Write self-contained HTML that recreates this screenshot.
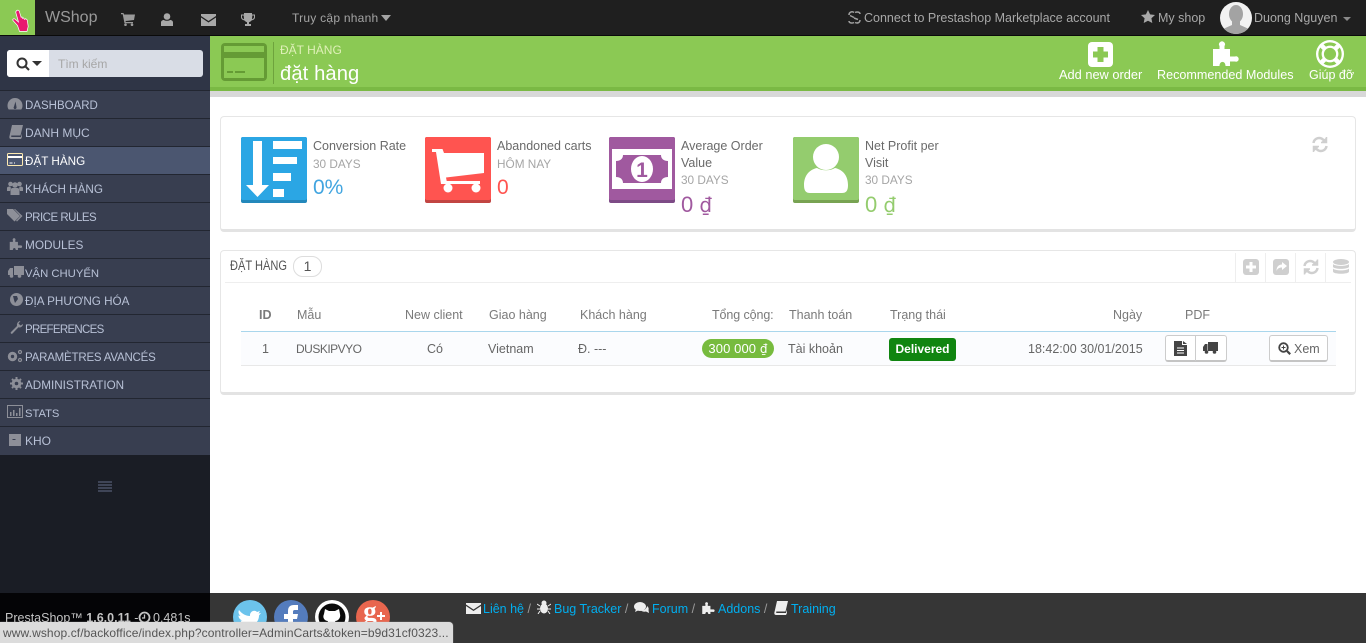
<!DOCTYPE html>
<html lang="vi"><head><meta charset="utf-8"><title>Đặt hàng</title>
<style>
html,body{margin:0;padding:0;width:1366px;height:643px;overflow:hidden;background:#fff;font-family:"Liberation Sans",sans-serif;font-size:13px;color:#666}
.a,.t,svg{position:absolute}
.t{white-space:nowrap;line-height:16px}
.m{position:absolute;left:0;width:210px;height:27px;background:#383e50;border-top:1px solid #222631}
.m span{position:absolute;left:25px;top:7px;font-size:11.700px;line-height:16px;color:#b8c1d6;white-space:nowrap}
.m svg{left:7px;top:6px}
.m.on{background:#4b5670}.m.on span{color:#fff}
.h{color:#7a7a7a;font-size:12.500px}
.k{color:#6a6a6a;font-size:12.500px}
.r{font-size:12.500px}
.s{color:#a5a5a5;font-size:11.800px}
.d{font-family:"DejaVu Sans",sans-serif}
a{color:#00aff0;text-decoration:none}
</style></head><body>

<!-- top bar -->
<div class="a" style="left:0;top:0;width:1366px;height:35px;background:#1f1f1f;border-bottom:1px solid #0a0a0a"></div>
<div class="a" style="left:0;top:0;width:35px;height:35px;background:#8bc954"></div>
<svg style="left:11px;top:9px" width="22" height="25" viewBox="0 0 22 25"><path d="M6 1.500c1-.8 2 0 2.300.8l1.800 6 .8-.4.6 1.500 1-.6 1 1.600 1.200-.7 1.500 1.200 1 6.500-1.200 5H8.500L6.500 16.500 2 11.500c-.8-1.200.8-2.300 1.800-1.500L7.500 13 4.800 3.500C4.700 2.700 5.300 1.800 6 1.500z" fill="#e8186f" stroke="#fff" stroke-width=".7"/></svg>
<div class="t" style="left:45px;top:8px;font-size:16px;line-height:20px;color:#999">WShop</div>

<svg style="left:121px;top:13px" width="14" height="13" viewBox="0 0 14 13" fill="#9a9a9a"><path d="M0 0h2.500l.5 1.500h11l-1 5.500-8.500 1 .3 1H12v1.200H3.500L1.700 1.200H0z"/><circle cx="4.500" cy="11.700" r="1.300"/><circle cx="11" cy="11.700" r="1.300"/></svg>
<svg style="left:161px;top:13px" width="12" height="13" viewBox="0 0 12 13" fill="#a8a8a8"><circle cx="6" cy="3.500" r="3.300"/><path d="M0 13V9.500C0 7.800 1.500 7 3 7c1 1 5 1 6 0 1.500 0 3 .8 3 2.500V13z"/></svg>
<svg style="left:201px;top:14px" width="15" height="12" viewBox="0 0 15 12" fill="#a8a8a8"><path d="M0 0h15v2L7.500 7 0 2z"/><path d="M0 3.500 7.500 8.500 15 3.500V12H0z"/></svg>
<svg style="left:241px;top:13px" width="14" height="13" viewBox="0 0 14 13" fill="#a8a8a8"><path d="M3 0h8v1.500h3V4c0 2-1.500 3-3.500 3.500C10 8.500 8.500 9 8 9.200V11h2v2H4v-2h2V9.200C5.500 9 4 8.500 3.500 7.500 1.500 7 0 6 0 4V1.500h3zM1 2.500V4c0 1 .8 1.800 2 2.200L2.700 2.500zM13 2.500h-1.700L11 6.200C12.200 5.800 13 5 13 4z"/></svg>
<div class="t" style="left:292px;top:10px;font-size:12px;letter-spacing:.25px;color:#a4a4a4">Truy cập nhanh</div>
<div class="a" style="left:381px;top:15px;border:5px solid transparent;border-top:6px solid #a4a4a4"></div>

<svg style="left:847px;top:10px" width="15" height="15" viewBox="0 0 15 15" fill="none" stroke="#a0a0a0" stroke-width="1.500"><path d="M2 5c0-3 3-4 5-2.500M8 2.500C10 1.500 13 2 13 4M3 5.500l4 2M7 8l4 1.500M13 10c0 3-3 3.500-5 2.500M7 12.500c-2 1-5 .5-5-1.500"/></svg>
<div class="t" style="left:864px;top:10px;font-size:12.500px;color:#a8a8a8">Connect to Prestashop Marketplace account</div>
<svg style="left:1141px;top:10px" width="14" height="13" viewBox="0 0 14 13"><path d="M7 0l2.100 4.400 4.900.6-3.600 3.300.9 4.700L7 10.700 2.700 13l.9-4.700L0 5l4.900-.6z" fill="#a8a8a8"/></svg>
<div class="t" style="left:1158px;top:10px;font-size:12.500px;color:#a8a8a8">My shop</div>
<svg style="left:1220px;top:2px" width="32" height="32" viewBox="0 0 32 32"><circle cx="16" cy="16" r="16" fill="#f2f2f2"/><clipPath id="av"><circle cx="16" cy="16" r="16"/></clipPath><g clip-path="url(#av)" fill="#a3a3a3"><ellipse cx="16" cy="12" rx="7" ry="9"/><path d="M12 19h8v4l9 4v6H3v-6l9-4z"/></g></svg>
<div class="t" style="left:1254px;top:10px;font-size:12.500px;color:#a8a8a8">Duong Nguyen</div>
<div class="a" style="left:1343px;top:17px;border:4px solid transparent;border-top:4px solid #8a8a8a"></div>

<!-- sidebar -->
<div class="a" style="left:0;top:36px;width:210px;height:54px;background:#2f3546"></div>
<div class="a" style="left:0;top:455px;width:210px;height:138px;background:#1a1d25"></div>
<div class="a" style="left:0;top:593px;width:210px;height:50px;background:#040406"></div>
<div class="a" style="left:7px;top:50px;width:196px;height:27px;background:#d9dde6;border-radius:3px"></div>
<div class="a" style="left:7px;top:50px;width:42px;height:27px;background:#fff;border-radius:3px 0 0 3px"></div>
<svg style="left:16px;top:57px" width="14" height="14" viewBox="0 0 14 14" fill="none" stroke="#333" stroke-width="2"><circle cx="6" cy="6" r="4.500"/><path d="M9.500 9.500 13 13"/></svg>
<div class="a" style="left:32px;top:61px;border:5px solid transparent;border-top:5px solid #333"></div>
<div class="t" style="left:58px;top:56px;font-size:12px;color:#a6a6a6">Tìm kiếm</div>

<div class="m" style="top:90px"><svg width="16" height="14" viewBox="0 0 16 14" fill="#8d8f98"><path d="M8 1a7.500 7.500 0 0 0-7.500 7.500c0 1.500.4 3 1.200 4h12.600c.8-1 1.200-2.500 1.200-4A7.500 7.500 0 0 0 8 1zM7 9.500l1.500-5 1 5.500a1.500 1.500 0 1 1-2.500-.5z"/></svg><span style="font-size:11.500px">DASHBOARD</span></div>
<div class="m" style="top:118px"><svg width="14" height="14" viewBox="0 0 14 14" fill="#8d8f98" style="left:9px"><path d="M3 0h11l-2.500 10.500H2.500C2 10.500 2 12 2.700 12H12l1-3.500V12l-1 2H2C.5 14 0 12.500.5 11z"/></svg><span style="font-size:12px;top:6px">DANH MỤC</span></div>
<div class="m on" style="top:146px"><svg width="16" height="13" viewBox="0 0 16 13" fill="none" stroke="#fff" style="left:7px"><rect x=".5" y=".5" width="15" height="12" rx="1" stroke="#fde9b0"/><path d="M1 4h14" stroke-width="2"/><path d="M2.500 10h3M7 10h1"/></svg><span>ĐẶT HÀNG</span></div>
<div class="m" style="top:174px"><svg width="16" height="14" viewBox="0 0 16 14" fill="#8d8f98"><circle cx="3.500" cy="3" r="2.300"/><circle cx="12.500" cy="3" r="2.300"/><circle cx="8" cy="4" r="2.800"/><path d="M0 10V7c0-1 1-1.500 3-1.500L4 7l-1 3zM16 10V7c0-1-1-1.500-3-1.500L12 7l1 3zM3.500 14V9.500c0-1.500 1-2.500 2-2.500h5c1 0 2 1 2 2.500V14z"/></svg><span>KHÁCH HÀNG</span></div>
<div class="m" style="top:202px"><svg width="16" height="13" viewBox="0 0 16 13" fill="#8d8f98"><path d="M0 0h6l7 7-5.500 5.500L0 5z"/><path d="M8 0l7.500 7-5.500 5.500-1-.8 4.500-4.700L7 0z"/></svg><span style="font-size:11.500px;letter-spacing:-.5px">PRICE RULES</span></div>
<div class="m" style="top:230px"><svg width="14" height="13" viewBox="0 0 28 27" fill="#8d8f98" style="left:9px"><path d="M1 10h6.500V7a3 3 0 1 1 5 0v3H18v7.500h5a2.700 2.700 0 1 1 0 5h-5V27h-4.500c0-5.500-6-5.500-6 0H1z"/></svg><span style="font-size:11.800px;top:6px">MODULES</span></div>
<div class="m" style="top:258px"><svg width="16" height="13" viewBox="0 0 16 13" fill="#8d8f98" style="left:8px"><path d="M6 1h10v9H6zM0 6l2-3h3v7H0z"/><circle cx="3.500" cy="11" r="1.800"/><circle cx="11.500" cy="11" r="1.800"/></svg><span style="font-size:11.300px">VẬN CHUYỂN</span></div>
<div class="m" style="top:286px"><svg width="13" height="13" viewBox="0 0 13 13" fill="#8d8f98" style="left:10px"><circle cx="6.500" cy="6.500" r="6.500"/><path d="M3 3h4l1 3-3 4-1-3z" fill="#383e50"/></svg><span>ĐỊA PHƯƠNG HÓA</span></div>
<div class="m" style="top:314px"><svg width="13" height="13" viewBox="0 0 13 13" fill="#8d8f98" style="left:10px"><path d="M13 3c0 2.500-2.500 4-4.500 3.300L2.500 12.500C1.500 13.500 0 12 1 11l6-6C6.500 2.500 8 0 10.500 0L8.500 2.500l2 2L13 3z"/></svg><span style="font-size:11.500px;letter-spacing:-.7px">PREFERENCES</span></div>
<div class="m" style="top:342px"><svg width="16" height="14" viewBox="0 0 16 14" fill="none" stroke="#8d8f98"><circle cx="5.500" cy="7.500" r="3.200" stroke-width="3"/><circle cx="13" cy="3" r="1.500" stroke-width="1.200"/><circle cx="13" cy="11" r="1.500" stroke-width="1.200"/></svg><span style="font-size:11.500px;letter-spacing:-.2px">PARAMÈTRES AVANCÉS</span></div>
<div class="m" style="top:370px"><svg width="13" height="13" viewBox="0 0 13 13" fill="none" stroke="#8d8f98" style="left:10px"><circle cx="6.500" cy="6.500" r="3.300" stroke-width="3"/><path d="M6.500 0v2M6.500 11v2M0 6.500h2M11 6.500h2M2 2l1.300 1.300M9.700 9.700 11 11M2 11l1.300-1.300M9.700 3.300 11 2" stroke-width="2"/></svg><span>ADMINISTRATION</span></div>
<div class="m" style="top:398px"><svg width="16" height="13" viewBox="0 0 16 13" fill="#8d8f98"><path d="M0 0h16v13H0zM1 1v11h14V1z"/><path d="M3 7h1.500v4H3zM6 5h1.500v6H6zM9 8h1.500v3H9zM12 3h1.500v8H12z"/></svg><span style="font-size:11.200px">STATS</span></div>
<div class="m" style="top:426px;height:28px"><svg width="12" height="12" viewBox="0 0 12 12" fill="#8d8f98" style="left:9px;top:7px"><path d="M0 0h12v12H0z"/><path d="M3.500 5h3v1h-3z" fill="#383e50"/></svg><span style="top:6px;font-size:12px">KHO</span></div>
<svg style="left:98px;top:481px" width="14" height="11" viewBox="0 0 14 11" fill="#3f4557"><path d="M0 0h14v2H0zM0 3h14v2H0zM0 6h14v2H0zM0 9h14v2H0z"/></svg>

<!-- page head -->
<div class="a" style="left:210px;top:36px;width:1156px;height:51px;background:#8bc954"></div>
<div class="a" style="left:210px;top:87px;width:1156px;height:4px;background:#7ab944"></div>
<div class="a" style="left:210px;top:91px;width:1156px;height:6px;background:#d8d8d8"></div>
<svg style="left:221px;top:43px" width="46" height="38" viewBox="0 0 46 38"><rect width="46" height="38" rx="4" fill="#659b35"/><rect x="3" y="3" width="40" height="6" fill="#8bc954"/><rect x="3" y="15" width="40" height="20" fill="#8bc954"/><path d="M6 28h6v2H6zM14 28h10v2H14z" fill="#659b35"/></svg>
<div class="a" style="left:273px;top:42px;width:1px;height:42px;background:#6ea33d"></div>
<div class="t" style="left:280px;top:42px;font-size:12px;color:#dff0b8">ĐẶT HÀNG</div>
<div class="t" style="left:280px;top:62px;font-size:20.200px;line-height:24px;color:#fff;letter-spacing:.1px">đặt hàng</div>

<svg style="left:1088px;top:42px" width="25" height="25" viewBox="0 0 25 25"><rect width="25" height="25" rx="4" fill="#fff"/><path d="M9.500 5h6v4.500H20v6h-4.500V20h-6v-4.500H5v-6h4.500z" fill="#8bc954"/></svg>
<div class="t" style="left:1059px;top:67px;font-size:12.800px;color:#fff">Add new order</div>
<svg style="left:1212px;top:39px" width="28" height="27" viewBox="0 0 28 27" fill="#fff"><path d="M1 10h6.500V7a3 3 0 1 1 5 0v3H18v7.500h5a2.700 2.700 0 1 1 0 5h-5V27h-4.500c0-5.500-6-5.500-6 0H1z"/></svg>
<div class="t" style="left:1157px;top:67px;font-size:12.600px;color:#fff">Recommended Modules</div>
<svg style="left:1316px;top:40px" width="28" height="28" viewBox="0 0 30 30"><circle cx="15" cy="15" r="15" fill="#fff"/><circle cx="15" cy="15" r="12.500" fill="#8bc954"/><path d="M5.500 5.500l19 19M24.500 5.500l-19 19" stroke="#fff" stroke-width="5"/><circle cx="15" cy="15" r="9" fill="#fff"/><circle cx="15" cy="15" r="6.500" fill="#8bc954"/></svg>
<div class="t" style="left:1309px;top:67px;font-size:12.500px;color:#fff">Giúp đỡ</div>

<!-- KPI panel -->
<div class="a" style="left:220px;top:116px;width:1134px;height:112px;border:1px solid #e6e6e6;border-bottom:3px solid #e3e3e3;border-radius:4px"></div>
<svg style="left:241px;top:137px" width="66" height="66" viewBox="0 0 66 66"><rect width="66" height="66" rx="2" fill="#2388bb"/><rect width="66" height="63" rx="2" fill="#2ba6e4"/><path d="M12 4h9v44h7L16.500 60 5 48h7z" fill="#fff"/><path d="M32 4h29v8H32zM32 20h24v7H32zM32 36h18v8H32zM32 52h11v8H32z" fill="#fff"/></svg>
<div class="t k" style="left:313px;top:138px">Conversion Rate</div>
<div class="t s" style="left:313px;top:156px">30 DAYS</div>
<div class="t" style="left:313px;top:175px;font-size:21px;line-height:26px;color:#42a5e0">0%</div>

<svg style="left:425px;top:137px" width="66" height="66" viewBox="0 0 66 66"><rect width="66" height="66" rx="2" fill="#c24542"/><rect width="66" height="63" rx="2" fill="#ff5450"/><path d="M7 12h10.500l1.500 4h40v20l-38 4.500.7 3.500H55v3H16L11 15H7z" fill="#fff"/><circle cx="23" cy="51" r="4.500" fill="#fff"/><circle cx="51" cy="51" r="4.500" fill="#fff"/></svg>
<div class="t k" style="left:497px;top:138px">Abandoned carts</div>
<div class="t s" style="left:497px;top:156px">HÔM NAY</div>
<div class="t" style="left:497px;top:175px;font-size:21px;line-height:26px;color:#ff5450">0</div>

<svg style="left:609px;top:137px" width="66" height="66" viewBox="0 0 66 66"><rect width="66" height="66" rx="2" fill="#7d4b86"/><rect width="66" height="63" rx="2" fill="#a0599f"/><rect x="3" y="12" width="60" height="40" fill="#fff"/><path d="M14 18h38c0 4 3 6 7 6v16c-4 0-7 2-7 6H14c0-4-3-6-7-6V24c4 0 7-2 7-6z" fill="#a0599f"/><ellipse cx="33" cy="32" rx="11" ry="13" fill="#fff"/><text x="33" y="40" font-family="Liberation Sans" font-size="21" font-weight="700" text-anchor="middle" fill="#a0599f">1</text></svg>
<div class="t k" style="left:681px;top:138px">Average Order</div>
<div class="t k" style="left:681px;top:155px">Value</div>
<div class="t s" style="left:681px;top:172px">30 DAYS</div>
<div class="t" style="left:681px;top:192px;font-size:22px;line-height:26px;color:#a0599f">0 <span class="d" style="font-size:20px">₫</span></div>

<svg style="left:793px;top:137px" width="66" height="66" viewBox="0 0 66 66"><rect width="66" height="66" rx="2" fill="#78a352"/><rect width="66" height="63" rx="2" fill="#94cc6e"/><circle cx="33" cy="20" r="13" fill="#fff"/><path d="M24 31c5 3 13 3 18 0 9 2 13 9 13 17 0 6-2 8-6 8H17c-4 0-6-2-6-8 0-8 4-15 13-17z" fill="#fff"/></svg>
<div class="t k" style="left:865px;top:138px">Net Profit per</div>
<div class="t k" style="left:865px;top:155px">Visit</div>
<div class="t s" style="left:865px;top:172px">30 DAYS</div>
<div class="t" style="left:865px;top:192px;font-size:22px;line-height:26px;color:#94cc6e">0 <span class="d" style="font-size:20px">₫</span></div>
<svg style="left:1312px;top:136px" width="16" height="17" viewBox="0 0 16 17" fill="none" stroke="#cfcfcf" stroke-width="2.500"><path d="M1.500 7C2 3 6 1 9.500 2.500L13 5"/><path d="M14.500 10c-.5 4-4.500 6-8 4.500L3 12"/><path d="M14.500 1v5.500H9M1.500 16v-5.500H7" stroke-width="1.500" fill="#cfcfcf"/></svg>

<!-- orders panel -->
<div class="a" style="left:220px;top:250px;width:1134px;height:141px;border:1px solid #e6e6e6;border-bottom:3px solid #e3e3e3;border-radius:4px"></div>
<div class="a" style="left:225px;top:282px;width:1126px;height:1px;background:#eee"></div>
<div class="t" style="left:230px;top:258px;font-size:13.500px;color:#555;transform:scaleX(.82);transform-origin:0 50%">ĐẶT HÀNG</div>
<div class="a" style="left:293px;top:256px;width:27px;height:19px;border:1px solid #ddd;border-radius:10px;text-align:center;line-height:19px;font-size:14px;color:#555">1</div>
<div class="a" style="left:1235px;top:253px;width:1px;height:29px;background:#eee"></div>
<div class="a" style="left:1265px;top:253px;width:1px;height:29px;background:#eee"></div>
<div class="a" style="left:1295px;top:253px;width:1px;height:29px;background:#eee"></div>
<div class="a" style="left:1325px;top:253px;width:1px;height:29px;background:#eee"></div>
<svg style="left:1243px;top:259px" width="16" height="16" viewBox="0 0 16 16"><rect width="16" height="16" rx="3" fill="#cfcfcf"/><path d="M6.500 3h3v3.500H13v3H9.500V13h-3V9.500H3v-3h3.500z" fill="#fff"/></svg>
<svg style="left:1273px;top:259px" width="16" height="16" viewBox="0 0 16 16"><rect width="16" height="16" rx="3" fill="#cfcfcf"/><path d="M9 3l5 4-5 4V8.500C6 8.500 4.500 9.500 3.500 12c0-4 2-6.500 5.500-6.500z" fill="#fff"/></svg>
<svg style="left:1303px;top:259px" width="16" height="16" viewBox="0 0 16 16" fill="none" stroke="#cfcfcf" stroke-width="2.500"><path d="M1.500 7C2 3 6 1 9.500 2.500L13 5"/><path d="M14.500 9c-.5 4-4.500 6-8 4.500L3 11"/><path d="M14.500 .5v5.500H9M1.500 15.500V10H7" stroke-width="1.500" fill="#cfcfcf"/></svg>
<svg style="left:1333px;top:259px" width="16" height="17" viewBox="0 0 16 17" fill="#cfcfcf"><ellipse cx="8" cy="3" rx="8" ry="3"/><path d="M0 5c2 2.500 14 2.500 16 0v3c-2 2.500-14 2.500-16 0zM0 9.500c2 2.500 14 2.500 16 0v3c0 3-16 3-16 0z"/></svg>

<div class="a" style="left:241px;top:331px;width:1095px;height:1px;background:#a9d6ec"></div>
<div class="a" style="left:241px;top:332px;width:1095px;height:33px;background:#fbfcfe"></div>
<div class="a" style="left:241px;top:365px;width:1095px;height:1px;background:#e8e8e8"></div>
<div class="t h" style="left:259px;top:307px;font-weight:700">ID</div>
<div class="t h" style="left:297px;top:307px">Mẫu</div>
<div class="t h" style="left:405px;top:307px">New client</div>
<div class="t h" style="left:489px;top:307px">Giao hàng</div>
<div class="t h" style="left:580px;top:307px">Khách hàng</div>
<div class="t h" style="left:712px;top:307px;letter-spacing:-.1px">Tổng cộng:</div>
<div class="t h" style="left:789px;top:307px">Thanh toán</div>
<div class="t h" style="left:890px;top:307px">Trạng thái</div>
<div class="t h" style="left:1113px;top:307px">Ngày</div>
<div class="t h" style="left:1185px;top:307px">PDF</div>

<div class="t r" style="left:262px;top:341px">1</div>
<div class="t" style="left:296px;top:341px;font-size:12px;letter-spacing:-.5px">DUSKIPVYO</div>
<div class="t r" style="left:427px;top:341px">Có</div>
<div class="t r" style="left:488px;top:341px">Vietnam</div>
<div class="t r" style="left:578px;top:341px">Đ. ---</div>
<div class="a" style="left:702px;top:339px;width:72px;height:19px;border-radius:10px;background:#77bb3e;color:#fff;text-align:center;line-height:19px;font-size:13px;letter-spacing:.1px">300 000 <span class="d" style="font-size:12px">₫</span></div>
<div class="t r" style="left:788px;top:341px">Tài khoản</div>
<div class="a" style="left:889px;top:338px;width:67px;height:23px;border-radius:3px;background:#108510;color:#fff;text-align:center;line-height:23px;font-size:12px;font-weight:700">Delivered</div>
<div class="t r" style="left:1028px;top:341px">18:42:00 30/01/2015</div>
<div class="a" style="left:1165px;top:335px;width:60px;height:24px;border:1px solid #ccc;border-bottom:2px solid #c4c4c4;border-radius:3px;background:#fff"></div>
<div class="a" style="left:1195px;top:336px;width:1px;height:25px;background:#ccc"></div>
<svg style="left:1174px;top:341px" width="13" height="15" viewBox="0 0 13 15"><path d="M0 0h8v4h5v11H0z" fill="#444"/><path d="M9 0l4 3H9z" fill="#444"/><path d="M3 7h7M3 9.500h7M3 12h7" stroke="#fff"/></svg>
<svg style="left:1203px;top:342px" width="15" height="12" viewBox="0 0 15 12" fill="#444"><path d="M5 0h10v9H5zM0 5l2-3h2.500v7H0z"/><circle cx="3.500" cy="10" r="1.800"/><circle cx="11.500" cy="10" r="1.800"/></svg>
<div class="a" style="left:1269px;top:335px;width:57px;height:24px;border:1px solid #ccc;border-bottom:2px solid #c4c4c4;border-radius:3px;background:#fff"></div>
<svg style="left:1278px;top:342px" width="13" height="13" viewBox="0 0 13 13" fill="none" stroke="#444"><circle cx="5.500" cy="5.500" r="4.300" stroke-width="1.800"/><path d="M9 9l3.200 3.200" stroke-width="2.200"/><path d="M3.500 5.500h4M5.500 3.500v4"/></svg>
<div class="t r" style="left:1294px;top:341px">Xem</div>

<!-- footer -->
<div class="a" style="left:210px;top:593px;width:1156px;height:50px;background:#363636"></div>
<div class="t" style="left:5px;top:610px;font-size:12.500px;color:#c4c4c4">PrestaShop™ <b>1.6.0.11</b> - </div>
<svg style="left:138px;top:611px" width="13" height="13" viewBox="0 0 13 13" fill="none" stroke="#c4c4c4" stroke-width="1.800"><circle cx="6.500" cy="6.500" r="5"/><path d="M6.500 3.500v3.500H4" stroke-width="1.300"/></svg>
<div class="t" style="left:153px;top:610px;font-size:12.500px;color:#c4c4c4">0.481s</div>

<svg style="left:233px;top:600px" width="34" height="34" viewBox="0 0 34 34"><circle cx="17" cy="17" r="17" fill="#6cc3ec"/><path d="M6 10c3 4 7 6 11 6-.5-4 4-7 7-4l3-1-1.500 2.500L28 13l-2 2.500C26 25 14 31 6 26c3 0 5-1 6.500-2-3 0-4.500-2-5-3.500h2c-3-1-4-3-4-5l2 .5C5.500 14 5 12 6 10z" fill="#fff"/></svg>
<svg style="left:274px;top:600px" width="34" height="34" viewBox="0 0 34 34"><circle cx="17" cy="17" r="17" fill="#547cbd"/><path d="M14 34V19h-4v-5h4v-3c0-4 2-6 6-6h4v5h-3c-1.500 0-2 .5-2 2v2h5l-1 5h-4v15z" fill="#fff"/></svg>
<svg style="left:315px;top:600px" width="34" height="34" viewBox="0 0 34 34"><circle cx="17" cy="17" r="17" fill="#fff"/><circle cx="17" cy="17" r="13.500" fill="#0a0a0a"/><path d="M10 9l4 2h6l4-2 1 5c1 4-2 7-5 7l1 2v7h-8v-3c-3 .5-4-1-5-3 1.500 0 2 1 3 1.500l2-4.500c-3 0-6-3-4-7z" fill="#fff"/></svg>
<svg style="left:356px;top:600px" width="34" height="34" viewBox="0 0 34 34"><circle cx="17" cy="17" r="17" fill="#e8664e"/><text x="14" y="20" font-family="Liberation Serif" font-size="27" font-weight="700" text-anchor="middle" fill="#fff">g</text><path d="M24 12h2v3h3v2h-3v3h-2v-3h-3v-2h3z" fill="#fff"/></svg>

<svg style="left:466px;top:603px" width="15" height="11" viewBox="0 0 15 11" fill="#eee"><path d="M0 0h15v1.500L7.500 6.500 0 1.500z"/><path d="M0 3l7.500 5L15 3v8H0z"/></svg>
<div class="t" style="left:483px;top:601px;font-size:12.500px;color:#9a9a9a"><a>Liên hệ</a> /</div>
<svg style="left:537px;top:600px" width="14" height="14" viewBox="0 0 14 14" fill="#eee"><ellipse cx="7" cy="8.500" rx="4" ry="5"/><circle cx="7" cy="3" r="2.500"/><path d="M0 4l3 2M14 4l-3 2M0 9h3M14 9h-3M1 14l2-3M13 14l-2-3" stroke="#eee"/></svg>
<div class="t" style="left:554px;top:601px;font-size:12.500px;color:#9a9a9a"><a>Bug Tracker</a> /</div>
<svg style="left:634px;top:602px" width="15" height="12" viewBox="0 0 15 12" fill="#eee"><ellipse cx="6" cy="4.500" rx="6" ry="4.500"/><path d="M2 7l-1 3 4-2zM13 4c1.500 1 2 2.500 1.500 4l.5 3-3-1.500c-2 .5-4 0-5-1 3 0 6-2 6-4.500z"/></svg>
<div class="t" style="left:652px;top:601px;font-size:12.500px;color:#9a9a9a"><a>Forum</a> /</div>
<svg style="left:701px;top:601px" width="15" height="13" viewBox="0 0 28 27" fill="#eee"><path d="M1 10h6.500V7a3 3 0 1 1 5 0v3H18v7.500h5a2.700 2.700 0 1 1 0 5h-5V27h-4.500c0-5.500-6-5.500-6 0H1z"/></svg>
<div class="t" style="left:718px;top:601px;font-size:12.500px;color:#9a9a9a"><a>Addons</a> /</div>
<svg style="left:774px;top:601px" width="14" height="14" viewBox="0 0 14 14" fill="#eee"><path d="M3 0h11l-2.500 10.500H2.500C2 10.500 2 12 2.700 12H12l1-3.500V12l-1 2H2C.5 14 0 12.500.5 11z"/></svg>
<div class="t" style="left:791px;top:601px;font-size:12.500px"><a>Training</a></div>

<!-- status bubble -->
<div class="a" style="left:0;top:622px;width:453px;height:21px;background:#dcdcdc;border-radius:0 4px 0 0;box-shadow:0 0 1px #bbb"></div>
<div class="t" style="left:3px;top:625px;font-size:12px;color:#555;letter-spacing:.1px">www.wshop.cf/backoffice/index.php?controller=AdminCarts&amp;token=b9d31cf0323...</div>
</body></html>
